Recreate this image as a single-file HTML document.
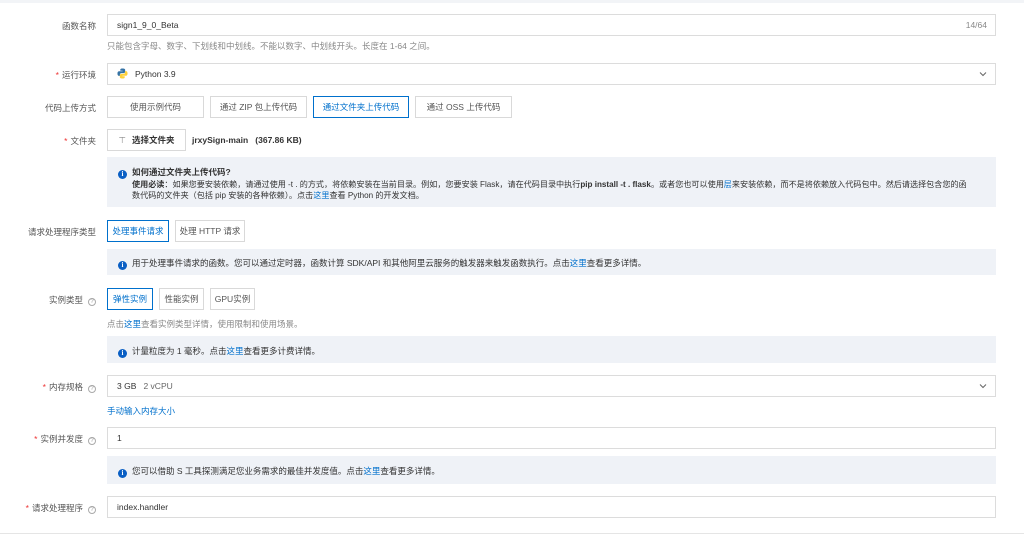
<!DOCTYPE html>
<html><head><meta charset="utf-8"><style>
*{box-sizing:border-box;margin:0;padding:0}
body{width:1024px;height:537px;background:#fff;position:relative;overflow:hidden;font-family:"Liberation Sans","Noto Sans CJK SC",sans-serif;font-size:8.5px;color:#333}
.a{position:absolute}
.lbl{position:absolute;right:928px;text-align:right;color:#555;font-size:8.5px;white-space:nowrap}
.lbl .s{color:#e33;margin-right:3px}
.inp{position:absolute;left:107px;width:889px;height:22px;border:1px solid #dcdcdc;background:#fff;padding-left:9px;line-height:20px;color:#333}
.btn{position:absolute;height:22px;border:1px solid #d9d9d9;background:#fff;line-height:20px;text-align:center;color:#555;white-space:nowrap}
.btn.on{border-color:#0070cc;color:#0070cc}
.info{position:absolute;left:107px;width:889px;background:#eff2f7;color:#333}
.hint{position:absolute;left:107px;color:#888}
.lk{color:#0070cc}
.ic{display:inline-block;width:9px;height:9px;border-radius:50%;background:#0a5fc4;color:#fff;font-size:7px;line-height:9px;text-align:center;font-weight:bold;vertical-align:-1px;margin-right:5px;font-family:"Liberation Serif",serif}
.q{display:inline-block;width:8px;height:8px;border:1px solid #aaa;border-radius:50%;font-size:6px;line-height:6px;text-align:center;color:#999;margin-left:5px;vertical-align:0}
.chev{position:absolute;right:8px;top:7px}
</style></head><body>
<div class="a" style="left:0;top:0;width:1024px;height:3px;background:#f2f4f7"></div>

<div class="lbl" style="top:20px">函数名称</div>
<div class="inp" style="top:14px">sign1_9_0_Beta<span style="position:absolute;right:8px;color:#888">14/64</span></div>
<div class="hint" style="top:40px">只能包含字母、数字、下划线和中划线。不能以数字、中划线开头。长度在 1-64 之间。</div>

<div class="lbl" style="top:69px"><span class="s">*</span>运行环境</div>
<div class="inp" style="top:63px;padding-left:9px">
<svg width="11" height="11" viewBox="0 0 12 12" style="vertical-align:-2px;margin-right:7px"><path d="M6 0.5C3.5 0.5 3.6 1.6 3.6 1.6V3h2.5v.5H2.5S.5 3.3.5 6s1.7 2.6 1.7 2.6h1V7.3S3.1 5.6 4.9 5.6h2.4s1.6 0 1.6-1.6V2S9.2 0.5 6 0.5z" fill="#3673a5"/><path d="M6 11.5c2.5 0 2.4-1.100 2.4-1.1V9H5.9v-.5h3.6s2 .2 2-2.5-1.7-2.6-1.7-2.6h-1v1.3s.1 1.7-1.7 1.7H4.7S3.1 6.4 3.1 8v2s-.3 1.5 2.9 1.5z" fill="#fdd13b"/></svg>Python 3.9
<svg class="chev" width="8" height="6" viewBox="0 0 8 6"><path d="M1 1.5l3 3 3-3" stroke="#666" fill="none" stroke-width="1"/></svg></div>

<div class="lbl" style="top:102px">代码上传方式</div>
<div class="btn" style="left:107px;top:96px;width:97px">使用示例代码</div>
<div class="btn" style="left:210px;top:96px;width:97px">通过 ZIP 包上传代码</div>
<div class="btn on" style="left:313px;top:96px;width:96px">通过文件夹上传代码</div>
<div class="btn" style="left:415px;top:96px;width:97px">通过 OSS 上传代码</div>

<div class="lbl" style="top:135px"><span class="s">*</span>文件夹</div>
<div class="btn" style="left:107px;top:129px;width:79px;color:#333;font-weight:bold"><span style="color:#888;font-weight:normal;margin-right:6px">⊤</span>选择文件夹</div>
<div class="a" style="left:192px;top:135px;font-weight:bold;color:#333">jrxySign-main &nbsp; (367.86 KB)</div>

<div class="info" style="top:157px;height:50px;padding:10px 0 0 11px;line-height:11px">
<div style="font-weight:bold"><span class="ic">i</span>如何通过文件夹上传代码?</div>
<div style="padding-left:14px;white-space:nowrap;font-size:8.1px"><b>使用必读</b>：如果您要安装依赖，请通过使用 -t . 的方式，将依赖安装在当前目录。例如，您要安装 Flask，请在代码目录中执行<b>pip install -t . flask</b>。或者您也可以使用<span class="lk">层</span>来安装依赖，而不是将依赖放入代码包中。然后请选择包含您的函<br>数代码的文件夹（包括 pip 安装的各种依赖）。点击<span class="lk">这里</span>查看 Python 的开发文档。</div>
</div>

<div class="lbl" style="top:226px">请求处理程序类型</div>
<div class="btn on" style="left:107px;top:220px;width:62px">处理事件请求</div>
<div class="btn" style="left:175px;top:220px;width:70px">处理 HTTP 请求</div>
<div class="info" style="top:249px;height:26px;padding:8px 0 0 11px"><span class="ic">i</span>用于处理事件请求的函数。您可以通过定时器，函数计算 SDK/API 和其他阿里云服务的触发器来触发函数执行。点击<span class="lk">这里</span>查看更多详情。</div>

<div class="lbl" style="top:294px">实例类型<span class="q">?</span></div>
<div class="btn on" style="left:107px;top:288px;width:46px">弹性实例</div>
<div class="btn" style="left:159px;top:288px;width:45px">性能实例</div>
<div class="btn" style="left:210px;top:288px;width:45px">GPU实例</div>
<div class="hint" style="top:318px">点击<span class="lk">这里</span>查看实例类型详情，使用限制和使用场景。</div>
<div class="info" style="top:336px;height:27px;padding:9px 0 0 11px"><span class="ic">i</span>计量粒度为 1 毫秒。点击<span class="lk">这里</span>查看更多计费详情。</div>

<div class="lbl" style="top:381px"><span class="s">*</span>内存规格<span class="q">?</span></div>
<div class="inp" style="top:375px">3 GB &nbsp;&nbsp;<span style="color:#666">2 vCPU</span>
<svg class="chev" width="8" height="6" viewBox="0 0 8 6"><path d="M1 1.5l3 3 3-3" stroke="#666" fill="none" stroke-width="1"/></svg></div>
<div class="a lk" style="left:107px;top:405px">手动输入内存大小</div>

<div class="lbl" style="top:433px"><span class="s">*</span>实例并发度<span class="q">?</span></div>
<div class="inp" style="top:427px">1</div>
<div class="info" style="top:456px;height:28px;padding:9px 0 0 11px"><span class="ic">i</span>您可以借助 S 工具探测满足您业务需求的最佳并发度值。点击<span class="lk">这里</span>查看更多详情。</div>

<div class="lbl" style="top:502px"><span class="s">*</span>请求处理程序<span class="q">?</span></div>
<div class="inp" style="top:496px">index.handler</div>

<div class="a" style="left:0;top:533px;width:1024px;height:1px;background:#e5e5e5"></div>
</body></html>
